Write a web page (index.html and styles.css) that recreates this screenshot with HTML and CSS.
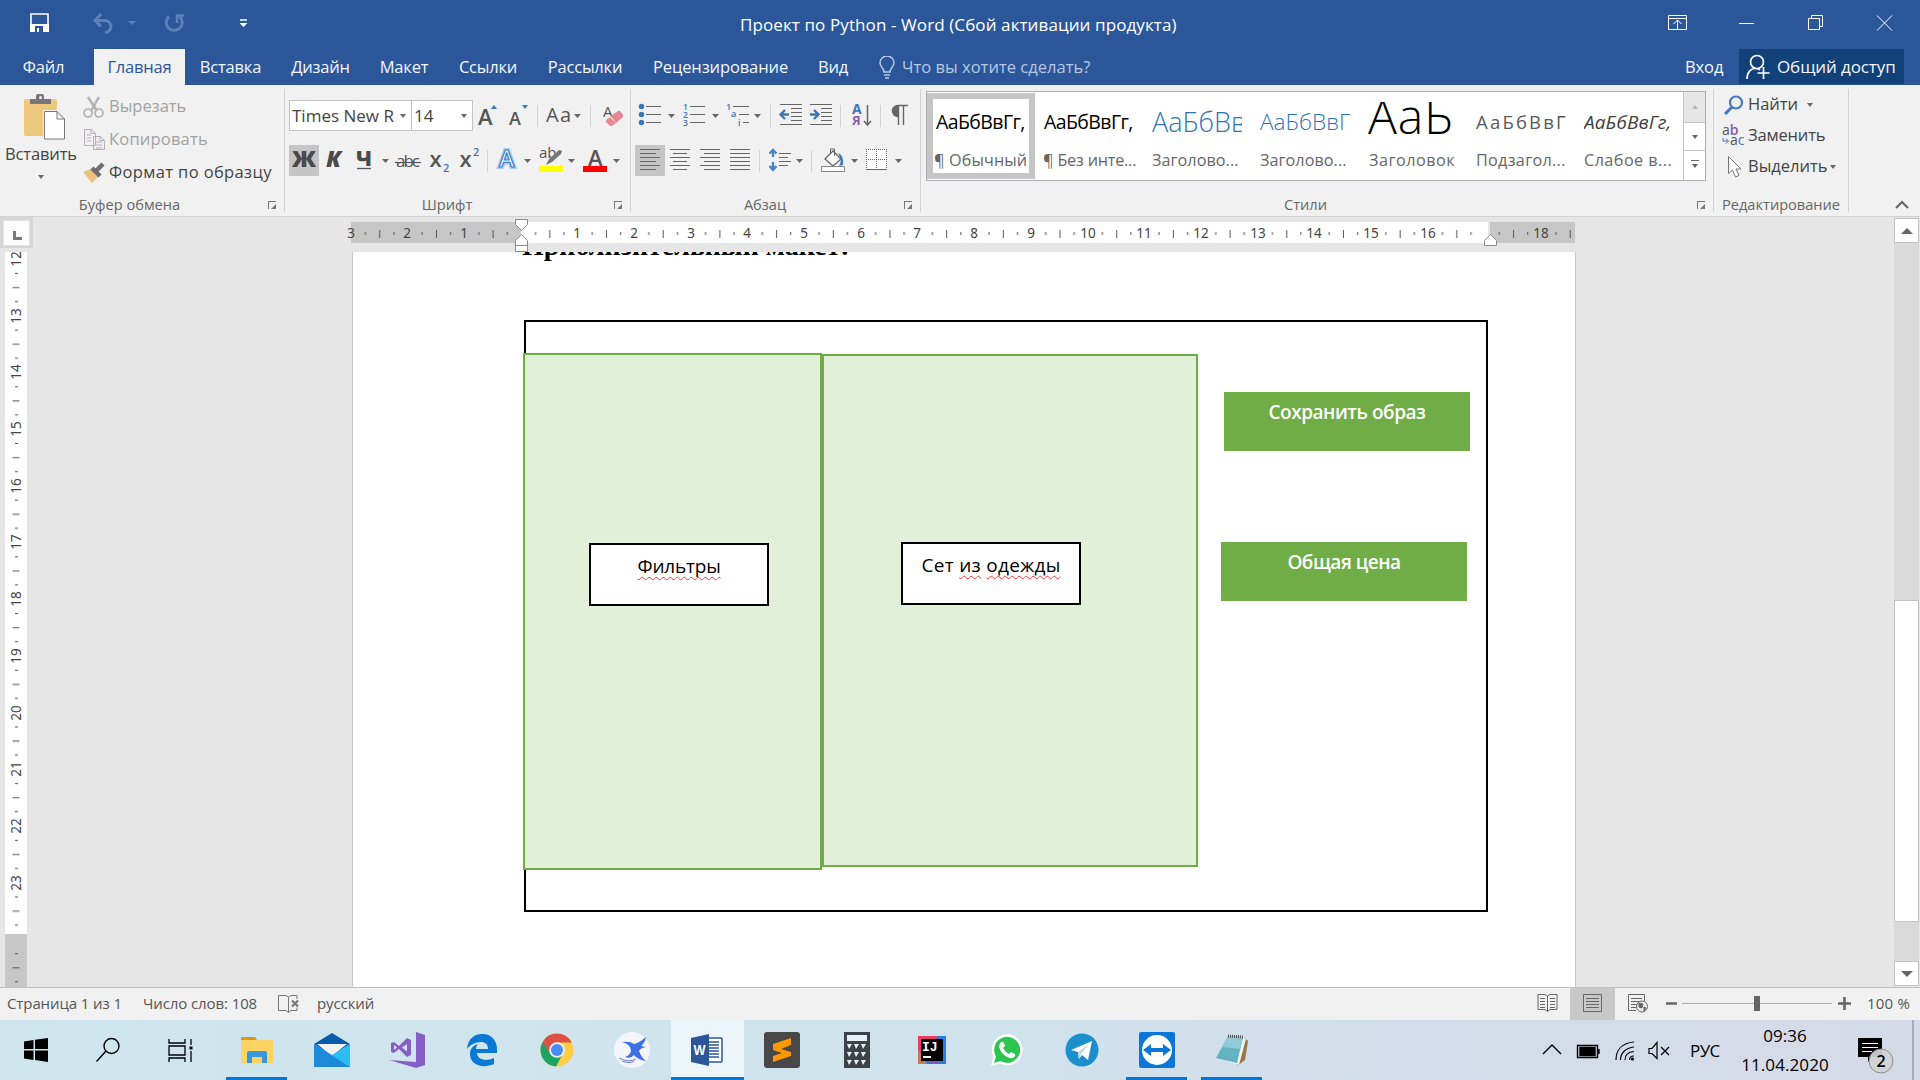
FILE: index.html
```html
<!DOCTYPE html>
<html lang="ru">
<head>
<meta charset="utf-8">
<title>Проект по Python - Word</title>
<link rel="stylesheet" href="styles.css">
</head>
<body>
<header class="titlebar">
  <div class="quick">
    <svg width="240" height="49" viewBox="0 0 240 49" fill="none">
      <path d="M1 14h17v17H1z" stroke="#fff" stroke-width="1.6"/><path d="M0 24h19v8H0z" fill="#fff"/><path d="M5 26h8v6H5z" fill="#2b579a"/><path d="M7 28h2v4H7z" fill="#fff"/>
      <g stroke="#5c80b7" stroke-width="3"><path d="M65 20.500h10a6 6 0 0 1 0 12"/><path d="M71 14l-6 6.500 6 6"/><path d="M139 16.500a8 8 0 1 0 10.500 0"/><path d="M147 23v-7.500h7" stroke-width="2.500"/></g>
      <path d="M98 21h8l-4 4z" fill="#5c80b7"/>
      <path d="M210 20h7" stroke="#fff" stroke-width="1.500"/><path d="M209.500 23h8l-4 4z" fill="#fff"/>
    </svg>
  </div>
  <div class="title">Проект по Python - Word (Сбой активации продукта)</div>
  <svg class="winctl" width="252" height="49" viewBox="0 0 252 49" fill="none" stroke="#fff">
    <path d="M.5 15.500h18v14H.5zM.5 18.500h18M9.500 29v-9M5.500 24l4-4 4 4M71 23.500h15M140.500 18.500h11v11h-11zM143.500 18v-2.500h11v11H152M209 15.500l15 15M224 15.500l-15 15"/>
  </svg>
</header>
<nav class="tabs">
  <span class="tab t-file">Файл</span><span class="tab t-home active">Главная</span><span class="tab t-ins">Вставка</span><span class="tab t-des">Дизайн</span><span class="tab t-lay">Макет</span><span class="tab t-ref">Ссылки</span><span class="tab t-mail">Рассылки</span><span class="tab t-rev">Рецензирование</span><span class="tab t-view">Вид</span>
  <svg class="bulb" width="16" height="24" viewBox="0 0 16 24" fill="none" stroke="#b9c9e2" stroke-width="1.500"><path d="M5 16c0-4-4-5-4-9a7 7 0 0 1 14 0c0 4-4 5-4 9zM5 19h6M6 22h4"/></svg>
  <span class="tell">Что вы хотите сделать?</span>
  <span class="login">Вход</span>
  <span class="share"><svg width="24" height="26" viewBox="0 0 24 26" fill="none" stroke="#fff" stroke-width="1.700"><circle cx="11" cy="8" r="6.500"/><path d="M1 25c0-7 4-10.500 8-10.500 2 0 4 .5 5 1.500M17.500 13v12M11.500 19h12"/></svg><b>Общий доступ</b></span>
</nav>

<section class="ribbon">
  <div class="group g-clip">
    <div class="clip-body">
      <div class="paste">
        <svg width="42" height="46" viewBox="0 0 42 46"><rect y="5" width="33" height="37" rx="2" fill="#edc87e"/><path d="M6 5h6V2q0-2 2-2h4q2 0 2 2v3h7v5H6z" fill="#777"/><circle cx="16.500" cy="3.500" r="1.500" fill="#f1f1f1"/><path d="M20.500 17.500H33l8 8v19.500H20.500z" fill="#fff" stroke="#f1f1f1" stroke-width="3"/><path d="M20.500 17.500H33l7.500 7.500v20h-20zM33 17.500V25h7.500" fill="#fff" stroke="#777"/></svg>
        <span class="paste-t">Вставить</span><i class="caret"></i>
      </div>
      <div class="clip-list">
        <div class="cmd dim"><svg width="22" height="24" viewBox="0 0 22 24" fill="none" stroke="#b1b1b1"><path d="M5 2l9 14M16 2L8 16" stroke-width="2.500"/><circle cx="5" cy="18" r="4" stroke-width="1.700"/><circle cx="16" cy="18" r="4" stroke-width="1.700"/></svg><span class="c-cut">Вырезать</span></div>
        <div class="cmd dim"><svg width="22" height="24" viewBox="0 0 22 24" fill="#f1f1f1" stroke="#b6aeb6"><path d="M1.500 1.500h7l4 4v12h-11zM8 1.500v4h4M4 7h4M4 10h4M4 13h4M10.500 8.500h7l4 4v9h-11zM17 8.500v4h4M13 14h6M13 17h6M13 20h6"/></svg><span class="c-copy">Копировать</span></div>
        <div class="cmd"><svg width="22" height="22" viewBox="0 0 22 22"><path d="M0 10l8-3 7 8-6 6z" fill="#e9c27f"/><path d="M9 6l8 8M13 9l7-7" stroke="#6d6d6d" stroke-width="4.500"/></svg><span class="c-fmt">Формат по образцу</span></div>
      </div>
    </div>
    <div class="label"><span class="l-clip">Буфер обмена</span></div><i class="launch"></i>
  </div>

  <div class="group g-font">
    <div class="tools font1">
      <div class="combo"><span class="cb1">Times New R</span><i class="caret"></i></div>
      <div class="combo"><span class="cb2">14</span><i class="caret"></i></div>
      <svg viewBox="0 0 30 31"><text x="5" y="25" class="gl" font-size="22">A</text><path d="M18 9l3-4 3 4z" fill="#3b78b5"/></svg>
      <svg viewBox="0 0 28 31"><text x="6" y="25" class="gl" font-size="18">A</text><path d="M19 5h6l-3 4z" fill="#3b78b5"/></svg>
      <svg viewBox="0 0 13 31"><path d="M6.500 5v22" stroke="#d2d2d2"/></svg>
      <svg viewBox="0 0 40 31"><text x="2" y="22" class="gl n" font-size="20" textLength="25">Aa</text><path d="M30 14h7l-3.500 4z" class="ca"/></svg>
      <svg viewBox="0 0 13 31"><path d="M6.500 5v22" stroke="#d2d2d2"/></svg>
      <svg viewBox="0 0 34 31"><text x="6" y="17" class="gl n" font-size="15">A</text><path d="M9 20l4-3 6 6-4 3h-2l-4-4z" fill="#e58a99"/><path d="M14 16l7-5h2l3 4v2l-7 6z" fill="#e58495"/></svg>
    </div>
    <div class="tools font2">
      <svg class="on" viewBox="0 0 30 31"><text x="3" y="22" class="gl b" font-size="22" textLength="24" lengthAdjust="spacingAndGlyphs">Ж</text></svg>
      <svg viewBox="0 0 30 31"><text x="7" y="22" class="gl b" font-style="italic" font-size="22" textLength="15" lengthAdjust="spacingAndGlyphs">К</text></svg>
      <svg viewBox="0 0 44 31"><text x="7" y="21" class="gl b" font-size="21" textLength="16" lengthAdjust="spacingAndGlyphs">Ч</text><path d="M8 23.500h14" stroke="#555" stroke-width="1.300"/><path d="M33 14h7l-3.500 4z" class="ca"/></svg>
      <svg viewBox="0 0 30 31"><text x="3" y="22" class="gl n" font-size="17" textLength="24">abc</text><path d="M2 17.500h26" stroke="#555" stroke-width="1.200"/></svg>
      <svg viewBox="0 0 30 31"><text x="6.500" y="22" class="gl" font-size="22">x</text><text x="20" y="27" class="bl" font-size="11">2</text></svg>
      <svg viewBox="0 0 30 31"><text x="6.500" y="22" class="gl" font-size="22">x</text><text x="20" y="11" class="bl" font-size="11">2</text></svg>
      <svg viewBox="0 0 9 31"><path d="M4.500 5v22" stroke="#d2d2d2"/></svg>
      <svg viewBox="0 0 42 31"><text x="7" y="22" font-size="23" font-weight="600" fill="#fff" stroke="#a9cdf0" stroke-width="4">A</text><text x="7" y="22" font-size="23" font-weight="600" fill="#fff" stroke="#3a7cc4" stroke-width="1.200" aria-hidden="true">A</text><path d="M32 14h7l-3.500 4z" class="ca"/></svg>
      <svg viewBox="0 0 45 31"><text x="5" y="13" class="gl n" font-size="15">ab</text><path d="M12 20l3-6 10-9 3 1-1 3-9 8z" fill="#777"/><path d="M5 21h24v6H5z" fill="#ff0"/><path d="M34 14h7l-3.500 4z" class="ca"/></svg>
      <svg viewBox="0 0 45 31"><text x="9" y="21" class="gl" font-size="22">A</text><path d="M4 21h24v6H4z" fill="red"/><path d="M34 14h7l-3.500 4z" class="ca"/></svg>
    </div>
    <div class="label"><span class="l-font">Шрифт</span></div><i class="launch"></i>
  </div>

  <div class="group g-para">
    <div class="tools para1">
      <svg viewBox="0 0 44 31"><g fill="#3b78b5"><circle cx="6.500" cy="6.500" r="2.700"/><circle cx="6.500" cy="14.500" r="2.700"/><circle cx="6.500" cy="22.500" r="2.700"/></g><path d="M11 6.500h15M11 14.500h15M11 22.500h15" class="ln"/><path d="M33 14h7l-3.500 4z" class="ca"/></svg>
      <svg viewBox="0 0 44 31"><g class="bl" font-size="8.500"><text x="4" y="10">1</text><text x="4" y="18">2</text><text x="4" y="26">3</text></g><path d="M11 6.500h15M11 14.500h15M11 22.500h15" class="ln"/><path d="M33 14h7l-3.500 4z" class="ca"/></svg>
      <svg viewBox="0 0 42 31"><g class="bl" font-size="9"><text x="3" y="10">1</text><text x="8" y="17">a</text><text x="15" y="26">i</text></g><path d="M10 6.500h16M16 14.500h10M20 22.500h6" class="ln"/><path d="M31 14h7l-3.500 4z" class="ca"/></svg>
      <svg viewBox="0 0 11 31"><path d="M5.500 5v22" stroke="#d2d2d2"/></svg>
      <svg viewBox="0 0 30 31"><path d="M4 4.500h22M15 8.500h11M15 12.500h11M15 16.500h11M15 20.500h11M4 24.500h22" class="ln"/><path d="M13 14.500H5M9 10l-4.500 4.500L9 19" stroke="#3b78b5" stroke-width="2.400" fill="none"/></svg>
      <svg viewBox="0 0 30 31"><path d="M4 4.500h22M15 8.500h11M15 12.500h11M15 16.500h11M15 20.500h11M4 24.500h22" class="ln"/><path d="M4 14.500h8M8 10l4.500 4.500L8 19" stroke="#3b78b5" stroke-width="2.400" fill="none"/></svg>
      <svg viewBox="0 0 9 31"><path d="M4.500 5v22" stroke="#d2d2d2"/></svg>
      <svg viewBox="0 0 31 31"><text x="7" y="14" font-size="14" font-weight="700" fill="#3b78b5">A</text><text x="7" y="25" font-size="13" font-weight="700" fill="#8a5bab">Я</text><path d="M22.500 5v19M19 21l3.500 4 3.500-4" class="ln" stroke-width="1.500"/></svg>
      <svg viewBox="0 0 9 31"><path d="M4.500 5v22" stroke="#d2d2d2"/></svg>
      <svg viewBox="0 0 31 31"><path d="M23 5.500H13a5.500 5.500 0 0 0 0 11V5M13.500 5v20M18.500 5v20" stroke="#666" fill="none" stroke-width="1.400"/><path d="M13 5.500a5.500 5.500 0 0 0 0 11z" fill="#666"/></svg>
    </div>
    <div class="tools para2">
      <svg class="on" viewBox="0 0 30 31"><path d="M5 4.500h20M5 8.500h16M5 12.500h20M5 16.500h16M5 20.500h20M5 24.500h16" class="ln"/></svg>
      <svg viewBox="0 0 30 31"><path d="M5 4.500h20M8 8.500h14M5 12.500h20M8 16.500h14M5 20.500h20M8 24.500h14" class="ln"/></svg>
      <svg viewBox="0 0 30 31"><path d="M5 4.500h20M9 8.500h16M5 12.500h20M9 16.500h16M5 20.500h20M9 24.500h16" class="ln"/></svg>
      <svg viewBox="0 0 30 31"><path d="M5 4.500h20M5 8.500h20M5 12.500h20M5 16.500h20M5 20.500h20M5 24.500h20" class="ln"/></svg>
      <svg viewBox="0 0 8 31"><path d="M4.500 5v22" stroke="#d2d2d2"/></svg>
      <svg viewBox="0 0 44 31"><path d="M10 5v7M6.500 8.500L10 5l3.500 3.500M10 17v8M6.500 21l3.500 4 3.500-4" stroke="#4681c4" stroke-width="2.300" fill="none"/><path d="M16 8.500h12M16 12.500h9M16 16.500h12M16 20.500h9" class="ln"/><path d="M33 14h7l-3.500 4z" class="ca"/></svg>
      <svg viewBox="0 0 10 31"><path d="M4.500 5v22" stroke="#d2d2d2"/></svg>
      <svg viewBox="0 0 45 31"><path d="M8 14l8-8 8 8-8 7z" fill="#fff" stroke="#666" stroke-width="1.300"/><path d="M13.500 9V4h4v7" fill="none" stroke="#666"/><path d="M21 8q6 2 5 12l-4 1q4-5-1-13z" fill="#3b78b5"/><path d="M4.500 21.500h23v5h-23z" fill="#fff" stroke="#888"/><path d="M34 14h7l-3.500 4z" class="ca"/></svg>
      <svg viewBox="0 0 45 31"><path d="M4 4h21v20H4z" fill="#fff"/><path d="M4 4.500h21M4.500 4v20M24.500 4v20M14.500 4v20M4 14.500h21" stroke="#666" stroke-dasharray="1 1"/><path d="M4 24.500h21" stroke="#666"/><path d="M33 14h7l-3.500 4z" class="ca"/></svg>
    </div>
    <div class="label"><span class="l-para">Абзац</span></div><i class="launch"></i>
  </div>

  <div class="group g-styles">
    <div class="gallery">
      <div class="style sel"><div class="sample s1">АаБбВвГг,</div><div class="sname n1">¶ Обычный</div></div>
      <div class="style"><div class="sample s1">АаБбВвГг,</div><div class="sname n2">¶ Без инте...</div></div>
      <div class="style"><div class="sample s3">АаБбВв</div><div class="sname n3">Заголово...</div></div>
      <div class="style"><div class="sample s4">АаБбВвГ</div><div class="sname n3">Заголово...</div></div>
      <div class="style"><div class="sample s5">АаЬ</div><div class="sname n5">Заголовок</div></div>
      <div class="style"><div class="sample s6">АаБбВвГ</div><div class="sname n6">Подзагол...</div></div>
      <div class="style"><div class="sample s7">АаБбВвГг,</div><div class="sname n7">Слабое в...</div></div>
      <div class="gscroll"><span class="off"><i class="caret up"></i></span><span><i class="caret"></i></span><span><i class="caret more"></i></span></div>
    </div>
    <div class="label"><span class="l-sty">Стили</span></div><i class="launch"></i>
  </div>

  <div class="group g-edit">
    <div class="edit-list">
      <div class="cmd"><svg width="22" height="20" viewBox="0 0 22 20" fill="none" stroke="#3f7ab8"><circle cx="13" cy="7.500" r="6" stroke-width="2.200"/><path d="M9 12l-7 7" stroke-width="3"/></svg><span class="c-find">Найти</span><i class="caret"></i></div>
      <div class="cmd"><svg width="24" height="24" viewBox="0 0 24 24"><text x="0" y="11" font-size="14" fill="#555">a<tspan fill="#8a5bab" font-weight="600">b</tspan></text><text x="8" y="21" font-size="14" fill="#555">a<tspan fill="#3b78b5">c</tspan></text><path d="M1 14v3h5M4 14.500L6.500 17 4 19.500" fill="none" stroke="#3b78b5"/></svg><span class="c-rep">Заменить</span></div>
      <div class="cmd"><svg width="22" height="22" viewBox="0 0 22 22"><path d="M5.500.5v17l4-3.500 3 7 3.500-1.500-3-6.500h5z" fill="#fff" stroke="#777"/></svg><span class="c-sel">Выделить</span><i class="caret"></i></div>
    </div>
    <div class="label"><span class="l-edit">Редактирование</span></div>
  </div>
  <svg class="collapse" width="14" height="9" viewBox="0 0 14 9"><path d="M1 8l6-6 6 6" fill="none" stroke="#666" stroke-width="2"/></svg>
</section>

<main class="work">
  <div class="left">
    <div class="tabsel"><i></i></div>
    <svg class="vruler" width="22" height="735" viewBox="0 0 22 735">
      <defs><pattern id="v" width="22" height="56.690" y="7" patternUnits="userSpaceOnUse"><path d="M10 14.500h3M7.500 28.500h7M10 42.500h3" stroke="#555"/></pattern></defs>
      <path d="M0 0h22v682H0z" fill="#fff"/><path d="M0 682h22v53H0z" fill="#c6c6c6"/>
      <path d="M0 0h22v735H0z" fill="url(#v)"/>
      <g class="rn"><text transform="translate(16 7) rotate(-90)">12</text><text transform="translate(16 64) rotate(-90)">13</text><text transform="translate(16 120) rotate(-90)">14</text><text transform="translate(16 177) rotate(-90)">15</text><text transform="translate(16 234) rotate(-90)">16</text><text transform="translate(16 290) rotate(-90)">17</text><text transform="translate(16 347) rotate(-90)">18</text><text transform="translate(16 404) rotate(-90)">19</text><text transform="translate(16 461) rotate(-90)">20</text><text transform="translate(16 517) rotate(-90)">21</text><text transform="translate(16 574) rotate(-90)">22</text><text transform="translate(16 631) rotate(-90)">23</text></g>
    </svg>
  </div>
  <div class="center">
    <svg class="hruler" width="1232" height="35" viewBox="0 0 1232 35">
      <defs><pattern id="h" width="56.690" height="35" x="176.500" patternUnits="userSpaceOnUse"><path d="M14 15v3M28.300 13v8M42.500 15v3" stroke="#555"/></pattern></defs>
      <path d="M6 5h170v21H6zM1145 5h85v21h-85z" fill="#c6c6c6"/><path d="M176 5h967v21H176z" fill="#fff"/>
      <path d="M8 5h1222v21H8z" fill="url(#h)"/>
      <g class="rn"><text x="6" y="21">3</text><text x="62" y="21">2</text><text x="119" y="21">1</text><text x="232" y="21">1</text><text x="289" y="21">2</text><text x="346" y="21">3</text><text x="402" y="21">4</text><text x="459" y="21">5</text><text x="516" y="21">6</text><text x="572" y="21">7</text><text x="629" y="21">8</text><text x="686" y="21">9</text><text x="743" y="21">10</text><text x="799" y="21">11</text><text x="856" y="21">12</text><text x="913" y="21">13</text><text x="969" y="21">14</text><text x="1026" y="21">15</text><text x="1083" y="21">16</text><text x="1196" y="21">18</text></g>
      <g fill="#fff" stroke="#8a8a8a"><path d="M170.500 2.500h12v5l-6 6-6-6zM170.500 28.500v-5l6-6 6 6v5zM170.500 28.500h12v6h-12zM1139.500 28.500v-5l6-6 6 6v5z"/></g>
    </svg>
    <div class="page">
      <div class="heading">Приблизительный макет:</div>
      <div class="shape outer"></div>
      <div class="shape panel p1"></div>
      <div class="shape panel p2"></div>
      <div class="shape box b1"><span class="w1">Фильтры</span></div>
      <div class="shape box b2"><span class="w2">Сет <u>из</u> <u>одежды</u></span></div>
      <div class="shape btn k1"><span class="w3">Сохранить образ</span></div>
      <div class="shape btn k2"><span class="w4">Общая цена</span></div>
    </div>
  </div>
  <div class="vscroll"><span class="sb"><i class="caret up big"></i></span><span class="gap"></span><span class="thumb"></span><span class="rest"></span><span class="sb"><i class="caret big"></i></span></div>
</main>

<footer class="status">
  <span class="st1">Страница 1 из 1</span><span class="st2">Число слов: 108</span>
  <svg class="proof" width="22" height="20" viewBox="0 0 22 20" fill="none" stroke="#777"><path d="M10.500 3L8 1.500H.5v15H8l2.500 2 2.500-2h6v-3M10.500 3v15M10.500 3L13 1.500h6V5"/><path d="M14 6.500l6 6M20 6.500l-6 6" stroke-width="2.200"/></svg>
  <span class="st3">русский</span>
  <div class="views">
    <svg width="44" height="32" viewBox="0 0 44 32" fill="none" stroke="#666"><path d="M21.500 8L19 6.500h-7v15h7l2.500 2 2.500-2h7v-15h-7zM21.500 8v15M14 10.500h5M14 13.500h5M14 16.500h5M14 19.500h5M24 10.500h5M24 13.500h5M24 16.500h5M24 19.500h5"/></svg>
    <svg class="on2" width="45" height="32" viewBox="0 0 45 32" fill="none" stroke="#666"><path d="M13.500 6.500h18v17h-18zM16 10.500h13M16 13.500h13M16 16.500h13M16 19.500h13"/></svg>
    <svg width="45" height="32" viewBox="0 0 45 32" fill="none" stroke="#666"><path d="M21 22.500h-7.500v-16h16V13M16 10.500h11M16 13.500h8M16 16.500h6M16 19.500h5"/><circle cx="27" cy="18.500" r="5.500"/><path d="M24 15l4 1-1 4-3-1zM29 19l2 1-2 3z" fill="#666"/></svg>
    <svg width="200" height="32" viewBox="0 0 200 32" fill="none" stroke="#666"><path d="M6 15.500h11M178 15.500h13M184.500 9v13" stroke-width="2.600"/><path d="M22 15.500h150" stroke="#aaa"/><path d="M94 8h6v15h-6z" fill="#666" stroke="none"/></svg>
    <span class="st4">100 %</span>
  </div>
</footer>

<div class="taskbar">
  <div class="tk w72"><svg width="26" height="26" viewBox="0 0 26 26"><path d="M1 4.500L10.500 3v9H1zM12 2.800L25 1v11H12zM1 13.500h9.500V23L1 21.500zM12 13.500h13V25l-13-2z"/></svg></div>
  <div class="tk w72"><svg width="26" height="26" viewBox="0 0 26 26" fill="none" stroke="#000" stroke-width="1.400"><circle cx="16.500" cy="9" r="7.500"/><path d="M11 14L1.500 24.500"/></svg></div>
  <div class="tk w75"><svg width="26" height="26" viewBox="0 0 26 26" fill="none" stroke="#000" stroke-width="1.300"><path d="M1 2v4h16V2M1 9h16v9H1zM1 25v-4h16v4M23 2v6M23 14v11"/><path d="M21.500 9.500h3v3h-3z" fill="#000" stroke="none"/></svg></div>
  <div class="tk run"><svg width="34" height="34" viewBox="0 0 34 34"><path d="M1 5q0-1 1-1h13l2 3H1z" fill="#dd9a08"/><rect x="1" y="7" width="32" height="23" rx="1" fill="#fdd363"/><path d="M7 30V20q0-2 2-2h16q2 0 2 2v10h-5v-6h-10v6z" fill="#3a95d9"/></svg></div>
  <div class="tk"><svg width="36" height="34" viewBox="0 0 36 34"><path d="M0 11L18 0l18 11-18 12z" fill="#0a5cab"/><path d="M3 11h30L18 23z" fill="#f2f2f2"/><path d="M0 11l18 11L36 11v23H0z" fill="#2cbdf2"/><path d="M0 11l36 23H0z" fill="#1c8ad8"/></svg></div>
  <div class="tk"><svg width="36" height="36" viewBox="0 0 36 36" fill="#865fc5"><path d="M27 0l9 3v30l-9 3L0 28l27 2z"/><path d="M2 11l3-1 5 4 8-8 4 2v15l-4 2-8-8-5 4-3-1zm3 2v5l3-2.500zm13-1l-5 3.500 5 4z" fill-rule="evenodd"/></svg></div>
  <div class="tk"><svg width="32" height="34" viewBox="0 0 32 34"><path d="M1 16C2 5 9 1 16 1c11 0 15 8 15 15v4H11c0 6 8 9 17 5v6C16 36 4 32 4 21c0-6 4-9 8-10-1 1-2 3-2 5h12c0-5-3-7-7-7-6 0-11 3-14 7z" fill="#0a78d7"/></svg></div>
  <div class="tk"><svg width="34" height="34" viewBox="0 0 34 34"><circle cx="17" cy="17" r="16.500" fill="#ffcd46"/><path d="M17 17L2.700 8.700A16.500 16.500 0 0 0 16 33.500l7-13z" fill="#1da362"/><path d="M17 9.500h14.700A16.500 16.500 0 0 0 2.700 8.700L10 21z" fill="#dd5144"/><circle cx="17" cy="17" r="7.800" fill="#f1f1f1"/><circle cx="17" cy="17" r="6" fill="#4a8af4"/></svg></div>
  <div class="tk"><svg width="36" height="36" viewBox="0 0 36 36"><circle cx="18" cy="18" r="18" fill="#f3f5fa"/><path d="M8 10q8-1 12 2 5-1 12-7-1 6-5 9l5 1q-6 1-7 4 2 6 7 10-8-1-12-6-3 4-9 2 6-2 6-7-1-6-9-8z" fill="#3c70e3"/><path d="M5 26q10 5 17 1M8 29q8 3 12 0" stroke="#6c7fd0" fill="none"/></svg></div>
  <div class="tk word"><svg width="34" height="34" viewBox="0 0 34 34"><path d="M18 5h13q1 0 1 1v22q0 1-1 1H18z" fill="#fff" stroke="#2b579a" stroke-width="1.500"/><path d="M19 9h10M19 12h10M19 15h10M19 18h10M19 21h10M19 24h10" stroke="#2b579a" stroke-width="1.500"/><path d="M1 5l18-4v32L1 29z" fill="#2b579a"/><text x="3.500" y="22" font-size="14" font-weight="700" fill="#fff" textLength="12" lengthAdjust="spacingAndGlyphs">W</text></svg></div>
  <div class="tk"><svg width="36" height="36" viewBox="0 0 36 36"><rect width="36" height="36" rx="3" fill="#484848"/><path d="M9 12l18-6v7l-10 4 10 3v4L9 30v-6l9-3-9-3z" fill="#ff9800"/></svg></div>
  <div class="tk"><svg width="26" height="36" viewBox="0 0 26 36"><path d="M0 0h26v36H0z" fill="#3b4248"/><path d="M3 3h20v6H3zM3 12h5l-3 5zM10 12h5l-3 5zM17 12h5l-3 5zM3 20h5l-3 5zM10 20h5l-3 5zM17 20h5l-3 5zM3 28h5l-3 5zM10 28h5l-3 5zM17 28h5l-3 5z" fill="#e8f2f6"/></svg></div>
  <div class="tk"><svg width="30" height="30" viewBox="0 0 30 30"><path d="M1 1h28v28H1z" fill="#2b7de0"/><path d="M1 1h20L4 29H1z" fill="#ee3a68"/><path d="M1 14l9 15H1z" fill="#c77b55"/><path d="M10 29l10-5v5z" fill="#8b4bc4"/><path d="M4 4h22v22H4z"/><text x="5" y="16" font-size="13" font-weight="700" fill="#fff" class="mono">IJ</text><path d="M6 21h8v2H6z" fill="#fff"/></svg></div>
  <div class="tk"><svg width="34" height="34" viewBox="0 0 34 34"><path d="M1 33l2.500-9A15.500 15.500 0 1 1 10 30.500z" fill="#fff"/><path d="M4 30l2-6.500A13 13 0 1 1 10.500 28z" fill="#2cc64e"/><path d="M11 9q2-1 3 1l1 3-2 2q2 4 6 6l2-2 4 2q1 3-3 4-4 1-10-5-5-7-1-11z" fill="#fff"/></svg></div>
  <div class="tk"><svg width="34" height="34" viewBox="0 0 34 34"><circle cx="17" cy="17" r="16.500" fill="#1b8fcb"/><path d="M6 17l21-9-4 19-6-5-3 4-1-7z" fill="#fff"/><path d="M13 19l11-8-8 10-2 5z" fill="#bdd7e8"/></svg></div>
  <div class="tk run"><svg width="36" height="36" viewBox="0 0 36 36"><rect width="36" height="36" rx="2" fill="#0a76da"/><circle cx="18" cy="18" r="15" fill="#fff"/><path d="M4 18l8-6v4h12v-4l8 6-8 6v-4H12v4z" fill="#0a76da"/></svg></div>
  <div class="tk run"><svg width="36" height="34" viewBox="0 0 36 34"><path d="M30 4l4 4-3 19-8 6z" fill="#9c7544"/><path d="M29 4l3 2-7 26-10-3z" fill="#eef3f4"/><path d="M14 3l15 1-6 26L2 25z" fill="#63b2c4"/><path d="M14 3l15 1-3 12-18-2z" fill="#8fcbd6"/><path d="M14 3l15 1" stroke="#555" stroke-width="3" stroke-dasharray="1 1"/></svg></div>
  <div class="tray">
    <svg width="130" height="30" viewBox="0 0 130 30" fill="none" stroke="#000" stroke-width="1.400"><path d="M2 19l9-9 9 9"/><path d="M36.500 10.500h20v12h-20zM58 14v5"/><path d="M39 12.500h15v8H39z" fill="#000"/><path d="M75 25C75 15 81 8 93 7M79.500 25c0-7 5-12 13.500-13M84 25c0-5 3-8 9-8.500M88.500 25c0-2 1-4 4.500-4" stroke-width="1.200"/><circle cx="91.500" cy="24" r="1.600" fill="#000" stroke="none"/><path d="M108 13.500h3l5-6v16l-5-5h-3zM120 12l8 8M128 12l-8 8" stroke-width="1.200"/></svg>
    <span class="lang">РУС</span>
    <div class="clock"><span class="ck1">09:36</span><span class="ck2">11.04.2020</span></div>
    <svg class="note" width="40" height="50" viewBox="0 0 40 50"><path d="M1 13h24v19H15l-4 5v-5H1z"/><path d="M5 18.500h16M5 22.500h16M5 26.500h10" stroke="#fff"/><circle cx="24" cy="36" r="12" fill="#d2d2d2" fill-opacity=".93" stroke="#8d8d8d"/><text x="24" y="42" text-anchor="middle" font-size="16" font-weight="600">2</text></svg>
    <i class="peek"></i>
  </div>
</div>
</body>
</html>
```
FILE: styles.css
```css
* { box-sizing: border-box; }
body { margin: 0; width: 1920px; height: 1080px; overflow: hidden; display: flex; flex-direction: column; font-family: "Open Sans", "Noto Sans", sans-serif; font-size: 17px; color: #444; background: #e6e6e6; }
span, b, .sname, .sample, .title { white-space: nowrap; }
svg { display: block; flex: none; }
svg text { font-family: "Open Sans", "Noto Sans", sans-serif; }
.gl { fill: #555; font-weight: 600; }
.gl.b { font-weight: 800; fill: #4a4a4a; }
.gl.n { font-weight: 400; }
.bl { fill: #3b78b5; font-weight: 600; }
.ln { stroke: #666; fill: none; }
.ca { fill: #666; }
svg text.mono { font-family: "Liberation Mono", monospace; }
.caret { flex: none; width: 0; height: 0; border: 3.500px solid transparent; border-top: 4px solid #666; border-bottom: 0; }
.caret.up { border-top: 0; border-bottom: 4px solid #b5b5b5; }
.caret.big { border-left-width: 6px; border-right-width: 6px; border-top-width: 6px; border-top-color: #666; }
.caret.up.big { border-top-width: 0; border-bottom: 6px solid #666; }

.titlebar { height: 49px; background: #2b579a; display: flex; color: #fff; padding-left: 30px; }
.quick { width: 710px; }
.title { width: 928px; line-height: 49px; font-size: 17px; letter-spacing: .1px; }
.tabs { height: 36px; background: #2b579a; display: flex; color: #f4f6fa; }
.tab { text-align: center; line-height: 35px; font-size: 16.500px; flex: none; letter-spacing: -.2px; }
.active { background: #f1f1f1; color: #2b579a; }
.t-file { width: 87px; margin-right: 7px; } .t-home { width: 91px; } .t-ins { width: 91px; } .t-des { width: 89px; } .t-lay { width: 78px; } .t-ref { width: 90px; } .t-mail { width: 104px; } .t-rev { width: 167px; letter-spacing: -.1px; } .t-view { width: 58px; }
.bulb { margin: 7px 7px 0 17px; }
.tell { width: 783px; line-height: 35px; font-size: 16.500px; letter-spacing: .02px; color: #b9c9e2; }
.login { width: 54px; line-height: 35px; font-size: 16.500px; letter-spacing: -.1px; }
.share { width: 165px; height: 35px; background: #124078; display: flex; align-items: center; padding-left: 7px; gap: 7px; }
.share b { font-weight: 400; font-size: 17px; letter-spacing: -.1px; }

.ribbon { height: 132px; background: #f1f1f1; border-bottom: 1px solid #d2d2d2; display: flex; flex: none; }
.group { position: relative; height: 131px; display: flex; flex-direction: column; background: linear-gradient(#d2d2d2, #d2d2d2) right 4px / 1px 123px no-repeat; }
.g-clip { width: 285px; } .g-font { width: 346px; padding-left: 4px; } .g-para { width: 290px; padding-left: 4px; } .g-styles { width: 793px; padding-left: 5px; } .g-edit { width: 135px; padding-left: 8px; }
.label { margin-top: auto; height: 22px; line-height: 20px; text-align: center; font-size: 14.600px; color: #666; padding-right: 26px; }
.g-edit .label { padding: 0 9px 0 0; }
.g-styles .label { padding-right: 29px; }
.launch { position: absolute; right: 9px; bottom: 7px; width: 8px; height: 8px; border: solid #777; border-width: 1px 0 0 1px; }
.launch::after { content: ""; position: absolute; right: 0; bottom: 0; width: 5px; height: 5px; background: #777; clip-path: polygon(100% 0, 100% 100%, 0 100%); }
.clip-body { display: flex; }
.paste { width: 82px; display: flex; flex-direction: column; align-items: center; padding-top: 9px; }
.paste svg { margin-left: 7px; }
.paste-t { line-height: 20px; margin: 4px 0 11px; font-size: 16.500px; letter-spacing: -.15px; }
.clip-list { padding: 5px 0 0 1px; }
.cmd { height: 33px; display: flex; align-items: center; font-size: 16.500px; gap: 4px; }
.cmd span { margin-top: -2px; }
.c-copy { letter-spacing: .2px; }
.c-fmt { letter-spacing: .37px; }
.dim { color: #a2a2a2; }
.tools { display: grid; height: 31px; }
.tools svg { width: 100%; height: 31px; overflow: visible; }
.on { background: #c5c5c5; }
.font1 { margin-top: 15px; grid-template-columns: 123px 61px 30px 28px 13px 40px 13px 34px; }
.font2 { margin-top: 14px; grid-template-columns: 30px 30px 44px 30px 30px 30px 9px 42px 45px 45px; }
.para1 { margin-top: 15px; grid-template-columns: 44px 44px 42px 11px 30px 30px 9px 31px 9px 31px; }
.para2 { margin-top: 14px; grid-template-columns: 30px 30px 30px 30px 8px 44px 10px 45px 45px; }
.combo { background: #fff; border: 1px solid #c3c3c3; display: flex; align-items: center; justify-content: space-between; padding: 0 5px 0 2px; }
.combo + .combo { border-left: 0; }
.gallery { margin-top: 6px; width: 780px; height: 90px; border: 1px solid #abadb3; background: #fff; display: flex; }
.style { width: 108px; height: 86px; margin-top: 1px; padding-left: 9px; flex: none; }
.sel { padding: 0; border: 6px solid #c5c5c5; padding-left: 3px; }
.sample { height: 57px; width: 90px; overflow: hidden; color: #000; line-height: 58px; }
.sel .sample { margin-top: -6px; }
.sname { line-height: 20px; font-size: 16.200px; color: #666; }
.n1 { margin-left: -2px; letter-spacing: .1px; } .n2 { margin-left: -1px; letter-spacing: -.2px; } .n3 { letter-spacing: .05px; } .n5 { letter-spacing: .5px; margin-left: 1px; } .n6 { letter-spacing: .3px; } .n7 { letter-spacing: .45px; }
.s1 { font-size: 19.500px; letter-spacing: -.6px; }
.s3 { font-size: 27px; font-weight: 300; color: #2e74b5; }
.s4 { font-size: 22.600px; font-weight: 300; color: #2e74b5; }
.s5 { font-size: 48px; font-weight: 300; line-height: 27px; letter-spacing: 1px; height: 48px; margin: 9px 0 0; }
.s6 { font-size: 18.500px; color: #5a5a5a; letter-spacing: 2.200px; }
.s7 { font-size: 19px; font-style: italic; color: #404040; letter-spacing: .1px; }
.gscroll { margin-left: auto; width: 22px; display: grid; grid-template-rows: 31px 28px 29px; border-left: 1px solid #c6c6c6; }
.gscroll span { display: flex; align-items: center; justify-content: center; border-bottom: 1px solid #c6c6c6; }
.gscroll span:last-child { border: 0; }
.gscroll .off { background: #e6e6e6; }
.caret.more { position: relative; }
.caret.more::before { content: ""; position: absolute; left: -4px; top: -8px; width: 8px; height: 1px; background: #666; }
.edit-list { padding-top: 4px; }
.edit-list .cmd { height: 31px; gap: 2px; }
.edit-list .cmd svg { width: 24px; }
.c-find { margin-right: 7px; }
.c-rep { letter-spacing: -.15px; }
.collapse { margin: 115px 0 0 46px; }

.work { flex: 1; min-height: 0; display: flex; border-bottom: 1px solid #c0c0c0; }
.left { width: 345px; flex: none; }
.tabsel { width: 33px; height: 31px; background: #d6d6d6; padding: 3px; margin-bottom: 4px; }
.tabsel i { display: block; width: 27px; height: 26px; background: linear-gradient(#777, #777) 9px 10px / 3px 9px no-repeat, linear-gradient(#777, #777) 9px 16px / 9px 3px no-repeat, #fcfcfc; border: 1px solid #e4e4e4; }
.vruler { margin-left: 5px; }
svg .rn text { font-family: "Noto Sans", sans-serif; font-size: 13.500px; fill: #444; text-anchor: middle; }
.center { width: 1231px; flex: none; }
.page { position: relative; width: 1224px; height: 735px; margin-left: 7px; background: #fff; border: solid #c6c6c6; border-width: 0 1px; overflow: hidden; }
.heading { position: absolute; left: 169px; top: -22px; font: bold 28px/32px "Liberation Serif", serif; color: #000; white-space: nowrap; }
.shape { position: absolute; text-align: center; }
.outer { left: 171px; top: 68px; width: 964px; height: 592px; border: 2px solid #000; }
.panel { background: #e2efd9; border: 2px solid #70ad47; }
.p1 { left: 170px; top: 101px; width: 299px; height: 517px; }
.p2 { left: 469px; top: 102px; width: 376px; height: 513px; }
.box { width: 180px; height: 63px; background: #fff; border: 2px solid #000; color: #000; font-size: 19px; line-height: 43px; }
.b1 { left: 236px; top: 291px; letter-spacing: -.2px; } .b2 { left: 548px; top: 290px; letter-spacing: .3px; }
.btn { width: 246px; height: 59px; background: #70ad47; color: #fff; font-size: 19px; line-height: 40px; font-weight: 600; letter-spacing: -.48px; }
.k1 { left: 871px; top: 140px; } .k2 { left: 868px; top: 290px; }
.box u, .w1 { text-decoration: underline wavy #f33 1px; text-underline-offset: 3px; text-decoration-skip-ink: none; }
.vscroll { margin: 1px 1px 1px auto; width: 25px; display: flex; flex-direction: column; background: #dadada; }
.sb { height: 25px; background: #fff; border: 1px solid #c3c3c3; display: flex; align-items: center; justify-content: center; }
.gap { height: 357px; } .thumb { height: 322px; background: #fff; border: 1px solid #c3c3c3; } .rest { flex: 1; }

.status { height: 32px; flex: none; background: #f1f1f1; display: flex; align-items: center; font-size: 15px; padding-left: 7px; color: #555; }
.status > span { line-height: 28px; padding-bottom: 2px; letter-spacing: -.1px; }
.st1 { width: 136px; } .st2 { width: 135px; } .proof { margin-right: 17px; }
.views { margin-left: auto; display: flex; align-items: center; }
.on2 { background: #c8c8c8; }
.st4 { width: 60px; padding: 0 0 2px 7px; letter-spacing: .2px; }

.taskbar { height: 60px; flex: none; display: flex; background: linear-gradient(90deg, #cfe6ee, #d0e3ed 50%, #d3dcea 75%, #d5dae8); }
.tk { width: 75px; height: 60px; display: flex; align-items: center; justify-content: center; flex: none; }
.w72 { width: 72px; } .w75 { width: 75px; padding-right: 2px; }
.run { background: linear-gradient(#0078d7, #0078d7) center bottom / 61px 3px no-repeat; }
.word { background: #ecf5f9; border-bottom: 3px solid #0078d7; width: 73px; margin: 0 0 0 2px; padding: 3px 1px 0 0; }
.tray { flex: 1; display: flex; align-items: center; padding-left: 272px; color: #000; font-size: 17px; }
.lang { margin-left: 19px; width: 50px; letter-spacing: -.6px; }
.clock { width: 90px; display: flex; flex-direction: column; align-items: center; line-height: 29px; }
.ck2 { letter-spacing: .1px; }
.note { margin: 0 0 0 27px; }
.peek { height: 60px; width: 2px; background: #a3abbd; margin-left: auto; margin-right: 6px; }
```
